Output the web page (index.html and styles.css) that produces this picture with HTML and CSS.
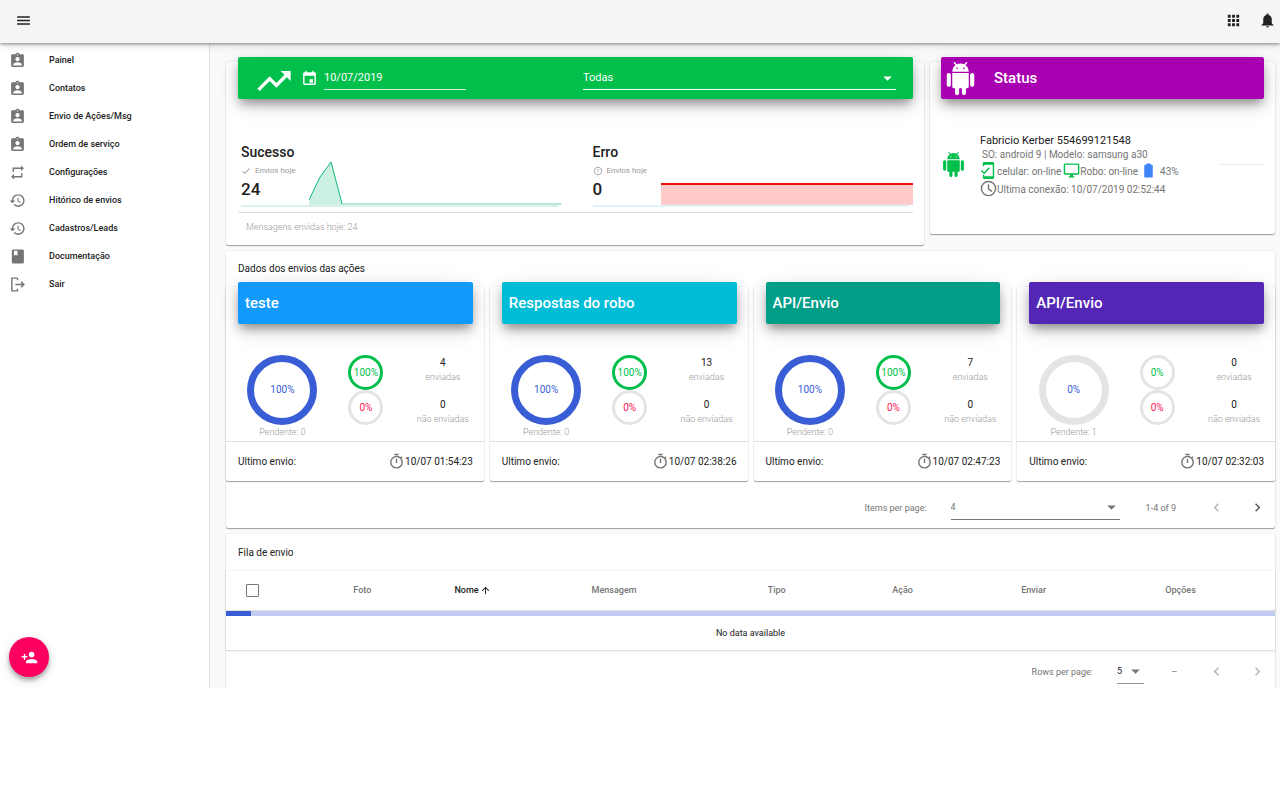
FILE: index.html
```html
<!DOCTYPE html>
<html lang="pt-BR">
<head>
<meta charset="utf-8">
<meta name="viewport" content="width=device-width, initial-scale=1">
<title>Painel</title>
<link rel="stylesheet" href="styles.css">
</head>
<body>
<svg class="sprite" aria-hidden="true">
  <symbol id="badge" viewBox="0 0 24 24"><path d="M19 3h-4.180C14.400 1.840 13.300 1 12 1c-1.300 0-2.400.84-2.820 2H5c-1.100 0-2 .9-2 2v14c0 1.100.9 2 2 2h14c1.100 0 2-.9 2-2V5c0-1.100-.9-2-2-2zm-7 0c.55 0 1 .45 1 1s-.45 1-1 1-1-.45-1-1 .45-1 1-1zm0 4c1.660 0 3 1.340 3 3s-1.340 3-3 3-3-1.340-3-3 1.340-3 3-3zm6 12H6v-1.400c0-2 4-3.100 6-3.100s6 1.100 6 3.100V19z"/></symbol>
  <symbol id="repeat" viewBox="0 0 24 24"><path d="M7 7h10v3l4-4-4-4v3H5v6h2V7zm10 10H7v-3l-4 4 4 4v-3h12v-6h-2v4z"/></symbol>
  <symbol id="history" viewBox="0 0 24 24"><path d="M13 3c-4.970 0-9 4.030-9 9H1l3.890 3.890.07.14L9 12H6c0-3.870 3.130-7 7-7s7 3.130 7 7-3.130 7-7 7c-1.930 0-3.680-.79-4.940-2.060l-1.420 1.420C8.270 19.990 10.510 21 13 21c4.970 0 9-4.030 9-9s-4.030-9-9-9zm-1 5v5l4.280 2.540.72-1.210-3.500-2.080V8H12z"/></symbol>
  <symbol id="book" viewBox="0 0 24 24"><path fill-rule="evenodd" d="M6 2h13a2 2 0 0 1 2 2v16a2 2 0 0 1-2 2H6a2 2 0 0 1-2-2V4a2 2 0 0 1 2-2zm1 2v7l2.500-1.500L12 11V4z"/></symbol>
  <symbol id="exit" viewBox="0 0 24 24"><path fill="none" stroke="currentColor" stroke-width="2" d="M12 3H4v18h8v-3M12 6V3M9 12h12M17 8l4 4-4 4"/></symbol>
  <symbol id="android" viewBox="0 0 24 24"><path d="M6 18c0 .55.45 1 1 1h1v3.500c0 .83.67 1.500 1.500 1.500s1.500-.67 1.500-1.500V19h2v3.500c0 .83.67 1.500 1.500 1.500s1.500-.67 1.500-1.500V19h1c.55 0 1-.45 1-1V8H6v10zM3.500 8C2.670 8 2 8.670 2 9.500v7c0 .83.67 1.500 1.500 1.500S5 17.330 5 16.500v-7C5 8.670 4.330 8 3.500 8zm17 0c-.83 0-1.500.67-1.500 1.500v7c0 .83.67 1.500 1.500 1.500s1.500-.67 1.500-1.500v-7c0-.83-.67-1.500-1.500-1.500zm-4.970-5.840l1.300-1.300c.2-.2.2-.51 0-.71-.2-.2-.51-.2-.71 0l-1.480 1.480C13.850 1.230 12.950 1 12 1c-.96 0-1.860.23-2.660.63L7.850.15c-.2-.2-.51-.2-.71 0-.2.2-.2.51 0 .71l1.310 1.310C6.970 3.260 6 5.010 6 7h12c0-1.990-.97-3.750-2.470-4.840zM10 5H9V4h1v1zm5 0h-1V4h1v1z"/></symbol>
  <symbol id="caret" viewBox="0 0 24 24"><path d="M6 9l6 6 6-6z"/></symbol>
  <symbol id="left" viewBox="0 0 24 24"><path d="M15.410 7.410L14 6l-6 6 6 6 1.410-1.410L10.830 12z"/></symbol>
  <symbol id="right" viewBox="0 0 24 24"><path d="M10 6L8.590 7.410 13.170 12l-4.580 4.590L10 18l6-6z"/></symbol>
  <symbol id="timer" viewBox="0 0 24 24"><path d="M15 1H9v2h6V1zm-4 13h2V8h-2v6zm8.030-6.610l1.420-1.420c-.43-.51-.9-.99-1.410-1.410l-1.420 1.420A8.960 8.960 0 0 0 12 4a9 9 0 1 0 9 9c0-2.120-.74-4.070-1.970-5.610zM12 20c-3.870 0-7-3.130-7-7s3.130-7 7-7 7 3.130 7 7-3.130 7-7 7z"/></symbol>
</svg>

<div class="app">
  <header class="topbar">
    <button class="icon-btn" aria-label="Menu"><svg class="icon" viewBox="0 0 24 24"><path d="M3 18h18v-2H3v2zm0-5h18v-2H3v2zm0-7v2h18V6H3z"/></svg></button>
    <div class="topbar-actions">
      <button class="icon-btn" aria-label="Aplicativos"><svg class="icon" viewBox="0 0 24 24"><path d="M4 8h4V4H4v4zm6 12h4v-4h-4v4zm-6 0h4v-4H4v4zm0-6h4v-4H4v4zm6 0h4v-4h-4v4zm6-10v4h4V4h-4zm-6 4h4V4h-4v4zm6 6h4v-4h-4v4zm0 6h4v-4h-4v4z"/></svg></button>
      <button class="icon-btn" aria-label="Notificações"><svg class="icon" viewBox="0 0 24 24"><path d="M14 20a2 2 0 0 1-4 0h4zM12 2c1 0 1.500.7 1.500 1.500v.8C16.300 5 18 7.500 18 10v6l3 3H3l3-3v-6c0-2.500 1.700-5 4.500-5.700v-.8C10.500 2.700 11 2 12 2z"/></svg></button>
    </div>
  </header>

  <div class="shell">
    <aside class="sidebar">
      <nav class="menu">
        <a href="#"><svg class="icon"><use href="#badge"/></svg>Painel</a>
        <a href="#"><svg class="icon"><use href="#badge"/></svg>Contatos</a>
        <a href="#"><svg class="icon"><use href="#badge"/></svg>Envio de Ações/Msg</a>
        <a href="#"><svg class="icon"><use href="#badge"/></svg>Ordem de serviço</a>
        <a href="#"><svg class="icon"><use href="#repeat"/></svg>Configurações</a>
        <a href="#"><svg class="icon"><use href="#history"/></svg>Hitórico de envios</a>
        <a href="#"><svg class="icon"><use href="#history"/></svg>Cadastros/Leads</a>
        <a href="#"><svg class="icon"><use href="#book"/></svg>Documentação</a>
        <a href="#"><svg class="icon"><use href="#exit"/></svg>Sair</a>
      </nav>
      <button class="fab" aria-label="Adicionar contato"><svg class="icon" viewBox="0 0 24 24"><path d="M15 12c2.210 0 4-1.790 4-4s-1.790-4-4-4-4 1.790-4 4 1.790 4 4 4zm-9-2V7H4v3H1v2h3v3h2v-3h3v-2H6zm9 4c-2.670 0-8 1.340-8 4v2h16v-2c0-2.660-5.330-4-8-4z"/></svg></button>
    </aside>

    <main class="content">
      <div class="top-row">
        <section class="card overview">
          <div class="banner green">
            <svg class="trend" viewBox="0 0 24 24"><path d="M16 6l2.290 2.290-4.880 4.880-4-4L2 16.590 3.410 18l6-6 4 4 6.300-6.290L22 12V6z"/></svg>
            <label class="date-field">
              <svg class="icon" viewBox="0 0 24 24"><path d="M19 3h-1V1h-2v2H8V1H6v2H5c-1.110 0-2 .9-2 2v14c0 1.100.89 2 2 2h14c1.100 0 2-.9 2-2V5c0-1.100-.9-2-2-2zm0 16H5V8h14v11zm-7-6h5v5h-5z"/></svg>
              <input type="text" value="10/07/2019" aria-label="Data">
            </label>
            <span class="select wide">
              <select aria-label="Ação"><option>Todas</option></select>
              <svg class="icon"><use href="#caret"/></svg>
            </span>
          </div>
          <div class="stats">
            <div class="stat">
              <div class="stat-main">
                <div class="stat-text">
                  <h2>Sucesso</h2>
                  <p><svg class="tiny" viewBox="0 0 24 24"><path d="M9 16.170L4.830 12l-1.420 1.410L9 19 21 7l-1.410-1.410z"/></svg>Envios hoje</p>
                  <strong>24</strong>
                </div>
                <svg class="chart" viewBox="0 0 252 44" preserveAspectRatio="none">
                  <path class="area-ok" d="M0 39L11 16 22 1 33 43V44H0z"/>
                  <path class="line-ok" d="M0 39L11 16 22 1 33 43"/>
                  <path class="line-flat" d="M33 43H252"/>
                </svg>
              </div>
              <div class="base ok"></div>
            </div>
            <div class="stat">
              <div class="stat-main">
                <div class="stat-text">
                  <h2>Erro</h2>
                  <p><svg class="tiny" viewBox="0 0 24 24"><path fill="none" stroke="currentColor" stroke-width="2" d="M12 3a9 9 0 1 0 0 18a9 9 0 1 0 0-18M12 7v6M12 15v2"/></svg>Envios hoje</p>
                  <strong>0</strong>
                </div>
                <svg class="chart" viewBox="0 0 252 44" preserveAspectRatio="none">
                  <path class="area-err" d="M0 23H252V44H0z"/>
                  <path class="line-err" d="M0 23H252"/>
                </svg>
              </div>
              <div class="base err"></div>
            </div>
          </div>
          <footer class="overview-foot">Mensagens envidas hoje: 24</footer>
        </section>

        <section class="card status">
          <div class="banner purple"><svg class="droid-lg"><use href="#android"/></svg><h2>Status</h2></div>
          <div class="device">
            <svg class="droid"><use href="#android"/></svg>
            <div class="device-info">
              <h3>Fabricio Kerber 554699121548</h3>
              <p>SO: android 9 | Modelo: samsung a30</p>
              <p class="with-icons">
                <svg class="state" viewBox="0 0 24 24"><path d="M18 0H6C4.900 0 4 .9 4 2v4h2V4h12v16H6v-2H4v4c0 1.100.9 2 2 2h12c1.100 0 2-.9 2-2V2c0-1.100-.9-2-2-2z"/><path fill="none" stroke="currentColor" stroke-width="2" d="M2 12l4 4 7-8"/></svg><span>celular: on-line</span>
                <svg class="state" viewBox="0 0 24 24"><path d="M21 2H3a2 2 0 0 0-2 2v12c0 1.100.9 2 2 2h7v2H8v2h8v-2h-2v-2h7a2 2 0 0 0 2-2V4a2 2 0 0 0-2-2zm0 14H3V4h18v12z"/></svg><span>Robo: on-line</span>
                <svg class="battery" viewBox="0 0 24 24"><path d="M16.700 4H15V2H9v2H7.300C6.600 4 6 4.600 6 5.300v15.400c0 .7.6 1.300 1.300 1.300h9.400c.7 0 1.300-.6 1.300-1.300V5.300c0-.7-.6-1.300-1.300-1.300z"/></svg><span>43%</span>
              </p>
              <p class="with-icons"><svg class="clock" viewBox="0 0 24 24"><path fill="none" stroke="currentColor" stroke-width="2" d="M12 2a10 10 0 1 0 0 20a10 10 0 1 0 0-20M12 6v7l5 3"/></svg><span>Ultima conexão: 10/07/2019 02:52:44</span></p>
            </div>
            <hr class="device-line">
          </div>
        </section>
      </div>

      <section class="card panel">
        <h3 class="panel-title">Dados dos envios das ações</h3>
        <div class="actions">
          <article class="card action">
            <div class="banner blue"><h2>teste</h2></div>
            <div class="figures">
              <div class="total"><div class="ring big on">100%</div><small>Pendente: 0</small></div>
              <div class="pair"><div class="ring sent on">100%</div><div class="ring failed">0%</div></div>
              <dl><dd>4</dd><dt>enviadas</dt><dd>0</dd><dt>não enviadas</dt></dl>
            </div>
            <footer><span>Ultimo envio:</span><time><svg class="icon"><use href="#timer"/></svg>10/07 01:54:23</time></footer>
          </article>
          <article class="card action">
            <div class="banner cyan"><h2>Respostas do robo</h2></div>
            <div class="figures">
              <div class="total"><div class="ring big on">100%</div><small>Pendente: 0</small></div>
              <div class="pair"><div class="ring sent on">100%</div><div class="ring failed">0%</div></div>
              <dl><dd>13</dd><dt>enviadas</dt><dd>0</dd><dt>não enviadas</dt></dl>
            </div>
            <footer><span>Ultimo envio:</span><time><svg class="icon"><use href="#timer"/></svg>10/07 02:38:26</time></footer>
          </article>
          <article class="card action">
            <div class="banner teal"><h2>API/Envio</h2></div>
            <div class="figures">
              <div class="total"><div class="ring big on">100%</div><small>Pendente: 0</small></div>
              <div class="pair"><div class="ring sent on">100%</div><div class="ring failed">0%</div></div>
              <dl><dd>7</dd><dt>enviadas</dt><dd>0</dd><dt>não enviadas</dt></dl>
            </div>
            <footer><span>Ultimo envio:</span><time><svg class="icon"><use href="#timer"/></svg>10/07 02:47:23</time></footer>
          </article>
          <article class="card action">
            <div class="banner violet"><h2>API/Envio</h2></div>
            <div class="figures">
              <div class="total"><div class="ring big">0%</div><small>Pendente: 1</small></div>
              <div class="pair"><div class="ring sent">0%</div><div class="ring failed">0%</div></div>
              <dl><dd>0</dd><dt>enviadas</dt><dd>0</dd><dt>não enviadas</dt></dl>
            </div>
            <footer><span>Ultimo envio:</span><time><svg class="icon"><use href="#timer"/></svg>10/07 02:32:03</time></footer>
          </article>
        </div>
        <div class="pager">
          <label for="items">Items per page:</label>
          <span class="select items"><select id="items"><option>4</option></select><svg class="icon"><use href="#caret"/></svg></span>
          <span class="range">1-4 of 9</span>
          <button class="icon-btn off" aria-label="Anterior" disabled><svg class="icon"><use href="#left"/></svg></button>
          <button class="icon-btn" aria-label="Próxima"><svg class="icon"><use href="#right"/></svg></button>
        </div>
      </section>

      <section class="card queue">
        <h3 class="queue-title">Fila de envio</h3>
        <table>
          <colgroup><col class="c-check"><col class="c-photo"><col class="c-name"><col class="c-msg"><col class="c-type"><col class="c-action"><col class="c-send"><col class="c-opt"></colgroup>
          <thead>
            <tr>
              <th><input type="checkbox" aria-label="Selecionar todos"></th>
              <th>Foto</th>
              <th class="sorted"><span>Nome <svg viewBox="0 0 24 24"><path d="M4 12l1.410 1.410L11 7.830V20h2V7.830l5.580 5.590L20 12l-8-8z"/></svg></span></th>
              <th>Mensagem</th><th>Tipo</th><th>Ação</th><th>Enviar</th><th>Opções</th>
            </tr>
            <tr class="loading"><th colspan="8"><div class="track"><div class="bar"></div></div></th></tr>
          </thead>
          <tbody><tr><td colspan="8">No data available</td></tr></tbody>
        </table>
        <div class="pager rows-pager">
          <label for="rows">Rows per page:</label>
          <span class="select rows"><select id="rows"><option>5</option></select><svg class="icon"><use href="#caret"/></svg></span>
          <span class="range">–</span>
          <button class="icon-btn off" aria-label="Página anterior" disabled><svg class="icon"><use href="#left"/></svg></button>
          <button class="icon-btn off" aria-label="Próxima página" disabled><svg class="icon"><use href="#right"/></svg></button>
        </div>
      </section>
    </main>
  </div>
</div>
</body>
</html>
```

FILE: styles.css
```css
* { box-sizing: border-box; }
body { margin: 0; background: #fff; color: #212121; font: 10px/14px Roboto, sans-serif; }
h2, h3, p, dl, dd { margin: 0; }
button, input, select { font: inherit; color: inherit; border: 0; padding: 0; margin: 0; background: none; border-radius: 0; }
svg { fill: currentColor; flex: none; }
.sprite { position: absolute; width: 0; height: 0; }
.icon { display: block; width: 17px; height: 17px; }
.icon-btn { display: grid; place-items: center; }

.app { height: 86vh; display: flex; flex-direction: column; overflow: hidden; background: #fafafa; }
.topbar { flex: none; display: flex; justify-content: space-between; align-items: center; height: 43px; padding: 0 4px 3px 15px; background: #f5f5f5; box-shadow: 0 1px 3px rgba(0,0,0,.4), 0 3px 7px rgba(0,0,0,.12); position: relative; z-index: 2; }
.topbar-actions { display: flex; gap: 17px; }
.shell { flex: 1; min-height: 0; display: flex; }

.sidebar { position: relative; flex: none; width: 210px; background: #fff; border-right: 1px solid #e4e4e4; }
.menu { padding-top: 3px; }
.menu a { display: flex; align-items: center; gap: 23px; height: 28px; padding-left: 9px; font-size: 9px; font-weight: 500; color: #1d1d1d; text-decoration: none; }
.menu .icon { color: #757575; }
.fab { position: absolute; left: 9px; bottom: 11px; width: 40px; height: 40px; border-radius: 50%; display: grid; place-items: center; background: #fc0060; color: #fff; box-shadow: 0 3px 4px rgba(0,0,0,.3), 0 4px 12px rgba(0,0,0,.12); }

.content { flex: 1; min-width: 0; padding: 19px 5px 0 16px; display: flex; flex-direction: column; gap: 6px; }
.card { background: #fff; border-radius: 2px; box-shadow: 0 1px 1px rgba(0,0,0,.35), 0 0 2px rgba(0,0,0,.12); }
.top-row { display: grid; grid-template-columns: 698fr 345fr; gap: 6px; align-items: start; }
.overview { padding: 0 11px 0 12px; height: 183px; }
.status { padding: 0 11px; height: 172px; }

.banner { display: flex; align-items: center; height: 42px; margin-top: -5px; padding: 0 7px; border-radius: 2px; color: #fff; box-shadow: 0 6px 10px -2px rgba(0,0,0,.4), 0 6px 22px rgba(0,0,0,.14); }
.banner h2 { font-size: 15px; line-height: 20px; font-weight: 500; }
.green { background: #00bf4a; padding: 0 17px 0 16px; }
.purple { background: #a800b0; padding-left: 3px; gap: 17px; }
.blue { background: #1199fb; }
.cyan { background: #00bdd7; }
.teal { background: #009d87; }
.violet { background: #5326b5; }
.trend { width: 40px; height: 40px; margin-top: 5px; }
.date-field { display: flex; align-items: center; gap: 6px; margin-left: 7px; }
.date-field input { width: 142px; height: 24px; border-bottom: 1px solid #d9f5e4; font-size: 11px; }
.select { display: grid; align-items: center; }
.select > * { grid-area: 1 / 1; }
.select select { appearance: none; width: 100%; height: 24px; border-bottom: 1px solid currentColor; outline: 0; }
.select .icon { justify-self: end; pointer-events: none; }
.wide { flex: 1; margin-left: 117px; }
.wide select { font-size: 11px; }

.stats { display: grid; grid-template-columns: 1fr 1fr; gap: 31px; padding: 43px 0 5px 3px; border-bottom: 1px solid #dedede; }
.stat-main { display: grid; grid-template-columns: 68px 1fr; align-items: end; height: 63px; }
.stat-text { height: 63px; }
.stat h2 { font-size: 14px; line-height: 20px; font-weight: 500; }
.stat p { display: flex; align-items: center; gap: 4px; margin: 3px 0 2px; font-size: 8px; line-height: 12px; color: #999; white-space: nowrap; }
.stat strong { display: block; font-size: 17px; line-height: 20px; font-weight: 500; }
.tiny { width: 10px; height: 10px; }
.chart { display: block; width: 100%; height: 44px; }
.chart path { vector-effect: non-scaling-stroke; fill: none; }
.chart .area-ok { fill: #ccf0e1; }
.chart .line-ok { stroke: #10b878; }
.chart .line-flat { stroke: #70d4ae; }
.chart .area-err { fill: #ffcaca; }
.chart .line-err { stroke: #f01010; stroke-width: 2; }
.base { height: 2px; margin-right: 4px; }
.base.ok { background: #d6f4e8; }
.base.err { background: #def3fc; }
.overview-foot { padding: 7px 8px; font-size: 9px; font-weight: 300; color: #999; }

.droid-lg { width: 33px; height: 33px; }
.device { display: flex; align-items: center; padding-top: 35px; }
.droid { width: 25px; height: 25px; margin-bottom: 4px; color: #00bf4a; }
.device-info { flex: 1; margin-left: 14px; white-space: nowrap; }
.device-info h3 { font-size: 11px; line-height: 14px; font-weight: 400; }
.device-info p { padding-left: 2px; color: #757575; }
.device-info .with-icons { display: flex; align-items: center; height: 18px; padding: 2px 0 0; }
.state { width: 17px; height: 17px; color: #00bf4a; margin-top: -4px; }
.state + span { margin-right: 2px; }
.clock { width: 17px; height: 17px; margin-top: -4px; }
.battery { width: 17px; height: 17px; color: #3f83f8; margin: -4px 3px 0 0; }
.device-line { width: 44px; height: 1px; margin: 0 0 4px; border: 0; background: #ececec; }

.panel-title, .queue-title { font-size: 10px; font-weight: 400; }
.panel-title { padding: 11px 12px; }
.actions { display: grid; grid-template-columns: repeat(4, 1fr); gap: 6px; }
.action .banner { margin: -5px 11px 0 12px; }
.figures { display: grid; grid-template-columns: 89fr 78fr 76fr; padding: 31px 3px 2px 12px; height: 118px; border-bottom: 1px solid #dedede; }
.total, .pair { display: flex; flex-direction: column; align-items: center; }
.total small, dt { font-size: 9px; line-height: 14px; font-weight: 300; color: #999; white-space: nowrap; }
.ring { display: grid; place-items: center; border-radius: 50%; border: 3px solid #e4e4e4; width: 35px; height: 35px; }
.big { width: 70px; height: 70px; border-width: 7px; color: #395dd5; }
.big.on { border-color: #395dd5; }
.sent { color: #00bf4a; }
.sent.on { border-color: #00bf4a; }
.failed { color: #fb1450; }
dl { text-align: center; padding-top: 1px; }
dd { line-height: 14px; }
dt { height: 28px; }
.action footer { display: flex; justify-content: space-between; align-items: center; height: 39px; padding: 0 11px 0 12px; }
.action time { display: flex; align-items: center; }
.action time .icon { color: #757575; }

.pager { display: flex; align-items: center; justify-content: flex-end; height: 47px; padding: 6px 9px 0 0; font-size: 9px; color: #757575; }
.pager .items { width: 169px; margin: 0 26px 0 24px; }
.pager .range { min-width: 29px; margin-right: 32px; text-align: center; }
.pager .icon-btn + .icon-btn { margin-left: 24px; color: #555; }
.pager .off, .pager .icon-btn + .off { color: #b3b3b3; }

.queue-title { padding: 12px 12px 11px; }
table { width: 100%; border-collapse: collapse; table-layout: fixed; box-shadow: 0 0 2px rgba(0,0,0,.12); }
.c-check { width: 5%; } .c-photo { width: 16%; } .c-name { width: 5%; } .c-msg { width: 22%; }
.c-type { width: 9%; } .c-action { width: 15%; } .c-send { width: 10%; } .c-opt { width: 18%; }
th { height: 39px; padding: 0; font-size: 9px; font-weight: 500; color: #757575; text-align: center; }
.sorted { color: #1d1d1d; white-space: nowrap; }
.sorted span { display: flex; align-items: center; justify-content: center; gap: 1px; }
.sorted svg { width: 11px; height: 11px; }
th input { appearance: none; display: block; width: 13px; height: 13px; margin: 0 auto; border: 1px solid #757575; border-radius: 1px; }
.loading th { height: auto; border-top: 1px solid #dedede; }
.track { height: 5px; background: #c3cdf2; }
.bar { width: 25px; height: 5px; background: #395dd5; }
td { height: 35px; padding: 0; font-size: 9px; text-align: center; border-bottom: 1px solid #dedede; }
.rows-pager { height: 41px; padding-top: 0; }
.pager .rows { width: 27px; margin: 0 16px 0 24px; }
.pager .rows + .range { margin-right: 19px; }
.rows select { color: #1d1d1d; border-bottom-color: #949494; }
```
